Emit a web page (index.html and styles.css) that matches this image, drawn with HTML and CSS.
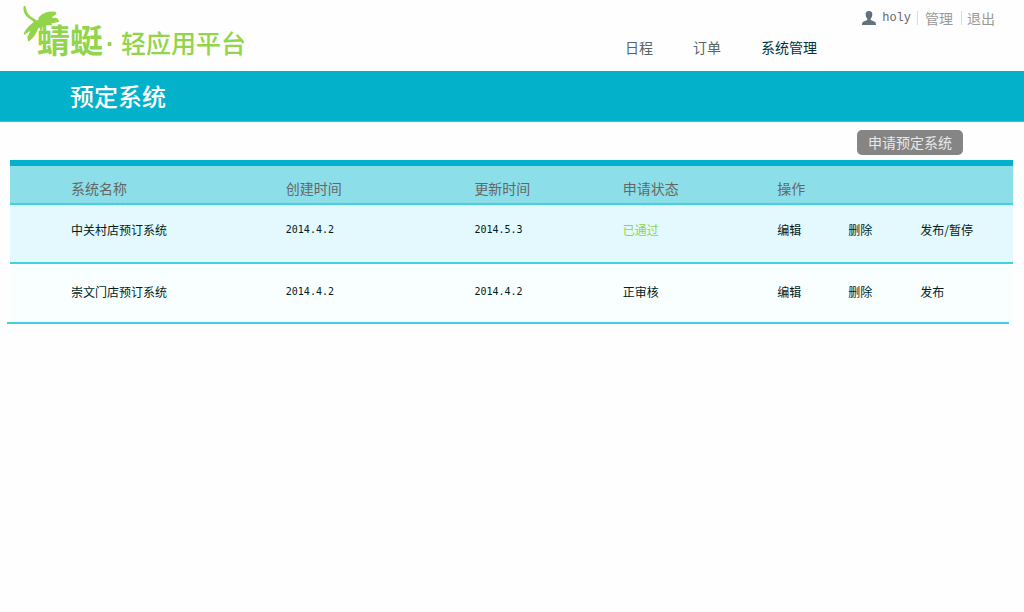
FILE: index.html
```html
<!DOCTYPE html>
<html lang="zh-CN">
<head>
<meta charset="utf-8">
<title>预定系统</title>
<link rel="stylesheet" href="styles.css">
</head>
<body>
<header class="header">
  <a class="brand" href="#">
    <svg class="brand-mark" viewBox="0 0 108 108" aria-hidden="true">
      <path d="M4 2C1 16 8 29 24 39C30 42 34 46 34 49C23 58 9 68 4 84L28 68L15 94L17 104C32 93 38 82 44 66L50 61L54 73L58 59L71 55L86 56L80 51L106 46L102 39L80 36L98 23L96 19C78 17 58 23 49 35L47 45L40 45C34 40 27 37 21 32C12 25 7 16 6 2Z"/>
    </svg>
    <span class="brand-name">蜻蜓</span>
    <span class="brand-dot">·</span>
    <span class="brand-sub">轻应用平台</span>
  </a>
  <div class="menus">
    <nav class="user">
      <svg class="user-icon" viewBox="0 0 14 14" aria-hidden="true">
        <path d="M7 0C4.500 0 3.500 1.600 3.700 3.800C3.800 5.800 4.600 7 5.300 7.800V9L1.200 10.800C.3 11.300 0 12.500 0 14H14C14 12.500 13.700 11.300 12.800 10.800L8.700 9V7.800C9.400 7 10.200 5.800 10.300 3.800C10.500 1.600 9.500 0 7 0Z"/>
      </svg>
      <span class="user-name">holy</span>
      <a class="user-link" href="#">管理</a>
      <a class="user-link" href="#">退出</a>
    </nav>
    <nav class="nav">
      <a href="#">日程</a>
      <a href="#">订单</a>
      <a class="current" href="#">系统管理</a>
    </nav>
  </div>
</header>
<div class="banner"><h1 class="title">预定系统</h1></div>
<main class="main">
  <div class="toolbar"><button class="apply" type="button">申请预定系统</button></div>
  <table class="systems">
    <colgroup>
      <col class="col-name">
      <col class="col-created">
      <col class="col-updated">
      <col class="col-status">
      <col>
    </colgroup>
    <thead>
      <tr>
        <th scope="col">系统名称</th>
        <th scope="col">创建时间</th>
        <th scope="col">更新时间</th>
        <th scope="col">申请状态</th>
        <th scope="col">操作</th>
      </tr>
    </thead>
    <tbody>
      <tr>
        <td>中关村店预订系统</td>
        <td class="date">2014.4.2</td>
        <td class="date">2014.5.3</td>
        <td class="passed">已通过</td>
        <td><div class="actions"><a href="#">编辑</a><a href="#">删除</a><a href="#">发布/暂停</a></div></td>
      </tr>
      <tr>
        <td>崇文门店预订系统</td>
        <td class="date">2014.4.2</td>
        <td class="date">2014.4.2</td>
        <td>正审核</td>
        <td><div class="actions"><a href="#">编辑</a><a href="#">删除</a><a href="#">发布</a></div></td>
      </tr>
    </tbody>
  </table>
  <hr class="table-end">
</main>
</body>
</html>
```
FILE: styles.css
```css
* { box-sizing: border-box; }
body {
  margin: 0;
  background: #fefefe;
  color: #001c22;
  font: 12px/20px "Noto Sans CJK SC", sans-serif;
}
a { color: inherit; text-decoration: none; }

.header {
  display: flex;
  justify-content: space-between;
  height: 71px;
  padding: 6px 29px 0 23px;
}
.brand {
  display: flex;
  align-items: flex-start;
  color: #92d44a;
  white-space: nowrap;
}
.brand-mark { width: 36px; height: 36px; margin-right: -22px; fill: #92d44a; stroke: #92d44a; stroke-width: 4; stroke-linejoin: round; }
.brand-name { padding-top: 13px; font-size: 33px; line-height: 40px; font-weight: 700; }
.brand-dot { width: 18px; padding-top: 18px; font: 700 25px/40px "Liberation Sans", sans-serif; padding-left: 3px; }
.brand-sub { padding-top: 16px; font-size: 25px; line-height: 40px; font-weight: 500; }

.menus { display: flex; flex-direction: column; gap: 8px; }
.user { display: flex; align-items: center; justify-content: flex-end; height: 23px; color: #999; font-size: 14px; }
.user-icon { width: 14px; height: 14px; margin-right: 6px; fill: #62717e; }
.user-name { margin-right: 6px; color: #666; font: 12px/20px "Liberation Mono", monospace; }
.user-link { padding-left: 7px; border-left: 1px solid #ddd; line-height: 14px; }
.user-link + .user-link { margin-left: 8px; padding-left: 5px; }
.nav { display: flex; gap: 40px; margin-right: 178px; color: #566; font-size: 14px; }
.nav .current { color: #00323d; }

.banner { padding: 5px 70px; background: #04b1cb; border-bottom: 1px solid #35c3d8; }
.title { margin: 0; color: #fff; font-size: 24px; line-height: 40px; font-weight: 500; }

.main { padding-top: 8px; }
.toolbar { display: flex; justify-content: flex-end; padding: 0 61px 5px 0; }
.apply {
  height: 25px;
  padding: 0 11px;
  border: 0;
  border-radius: 5px;
  background: #858585;
  color: #e8e8e8;
  font: 14px/25px "Noto Sans CJK SC", sans-serif;
}

.systems {
  width: calc(100% - 21px);
  margin-left: 10px;
  border-collapse: separate;
  border-spacing: 0;
  table-layout: fixed;
}
.col-name { width: 27.5%; }
.col-created { width: 18.8%; }
.col-updated { width: 14.8%; }
.col-status { width: 15.4%; }
.systems th, .systems td { padding: 0; text-align: left; }
.systems th {
  height: 45px;
  padding-top: 6px;
  border-top: 6px solid #04b1cb;
  border-bottom: 2px solid #45d0e2;
  background: #8cdfe9;
  color: #666;
  font-size: 14px;
  font-weight: 400;
}
.systems td { height: 59px; padding-bottom: 7px; border-bottom: 2px solid #45d0e2; background: #e3f9fd; }
.systems tbody tr:last-child td { height: 58px; padding-bottom: 2px; border-bottom: 0; background: #f9ffff; }
.systems th:first-child, .systems td:first-child { padding-left: 61px; }
.systems .date { font-family: "DejaVu Sans Mono", monospace; font-size: 10px; }
.systems .passed { color: #92d44a; }
.actions { display: grid; grid-template-columns: 71px 72px auto; }
.table-end { height: 2px; margin: 0 15px 0 7px; border: 0; background: #45d0e2; }
```
